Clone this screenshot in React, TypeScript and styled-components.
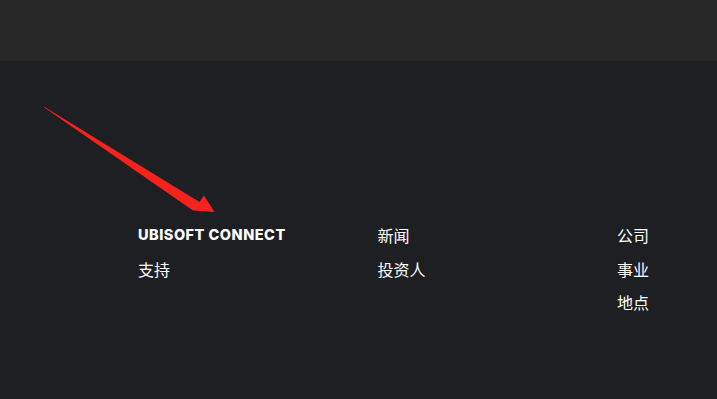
import React from 'react';
import styled, {createGlobalStyle} from 'styled-components';

const COLUMNS: {label: string, brand?: boolean}[][] = [
  [{label: 'UBISOFT CONNECT', brand: true}, {label: '支持'}],
  [{label: '新闻'}, {label: '投资人'}],
  [{label: '公司'}, {label: '事业'}, {label: '地点'}],
];

export default function App() {
  return (
    <>
      <GlobalStyle/>
      <Page>
        <TopBar/>
        <Footer>
          <Arrow width="230" height="230" viewBox="0 0 230 230">
            <polygon
              points="43,106 199.5,201.9 204,195.5 214.5,212 193,210.5 45,108"
              fill="#f5231c"
            />
          </Arrow>
          <Columns>
            {COLUMNS.map((col, i) => (
              <Column key={i}>
                {col.map((item) => (
                  <Link key={item.label} $brand={item.brand}>{item.label}</Link>
                ))}
              </Column>
            ))}
          </Columns>
        </Footer>
      </Page>
    </>
  );
}

const GlobalStyle = createGlobalStyle`
  html, body { margin: 0; padding: 0; background: #1e1f23; }
  body { font-family: Inter, "Noto Sans CJK SC", sans-serif; }
`;

const Page = styled.div`
  width: 717px;
  height: 399px;
  overflow: hidden;
  display: flex;
  flex-direction: column;
`;

const TopBar = styled.div`
  height: 61px;
  flex: 0 0 auto;
  background: #282828;
`;

const Footer = styled.div`
  position: relative;
  flex: 1 1 auto;
  background: #1e1f23;
  padding: 162px 0 0 138px;
`;

const Arrow = styled.svg`
  position: absolute;
  left: 0;
  top: -61px;
`;

const Columns = styled.div`
  display: grid;
  grid-template-columns: repeat(3, 239.5px);
`;

const Column = styled.div`
  display: flex;
  flex-direction: column;
  gap: 9.5px;
`;

const Link = styled.a<{$brand?: boolean}>`
  display: block;
  height: 24px;
  line-height: 24px;
  color: #ffffff;
  font-family: ${p => p.$brand ? 'Inter, sans-serif' : '"Noto Sans CJK SC", sans-serif'};
  font-size: ${p => p.$brand ? '14.5px' : '16px'};
  font-weight: ${p => p.$brand ? 800 : 400};
  letter-spacing: ${p => p.$brand ? '0.5px' : '0'};
  white-space: nowrap;
  cursor: pointer;
`;
